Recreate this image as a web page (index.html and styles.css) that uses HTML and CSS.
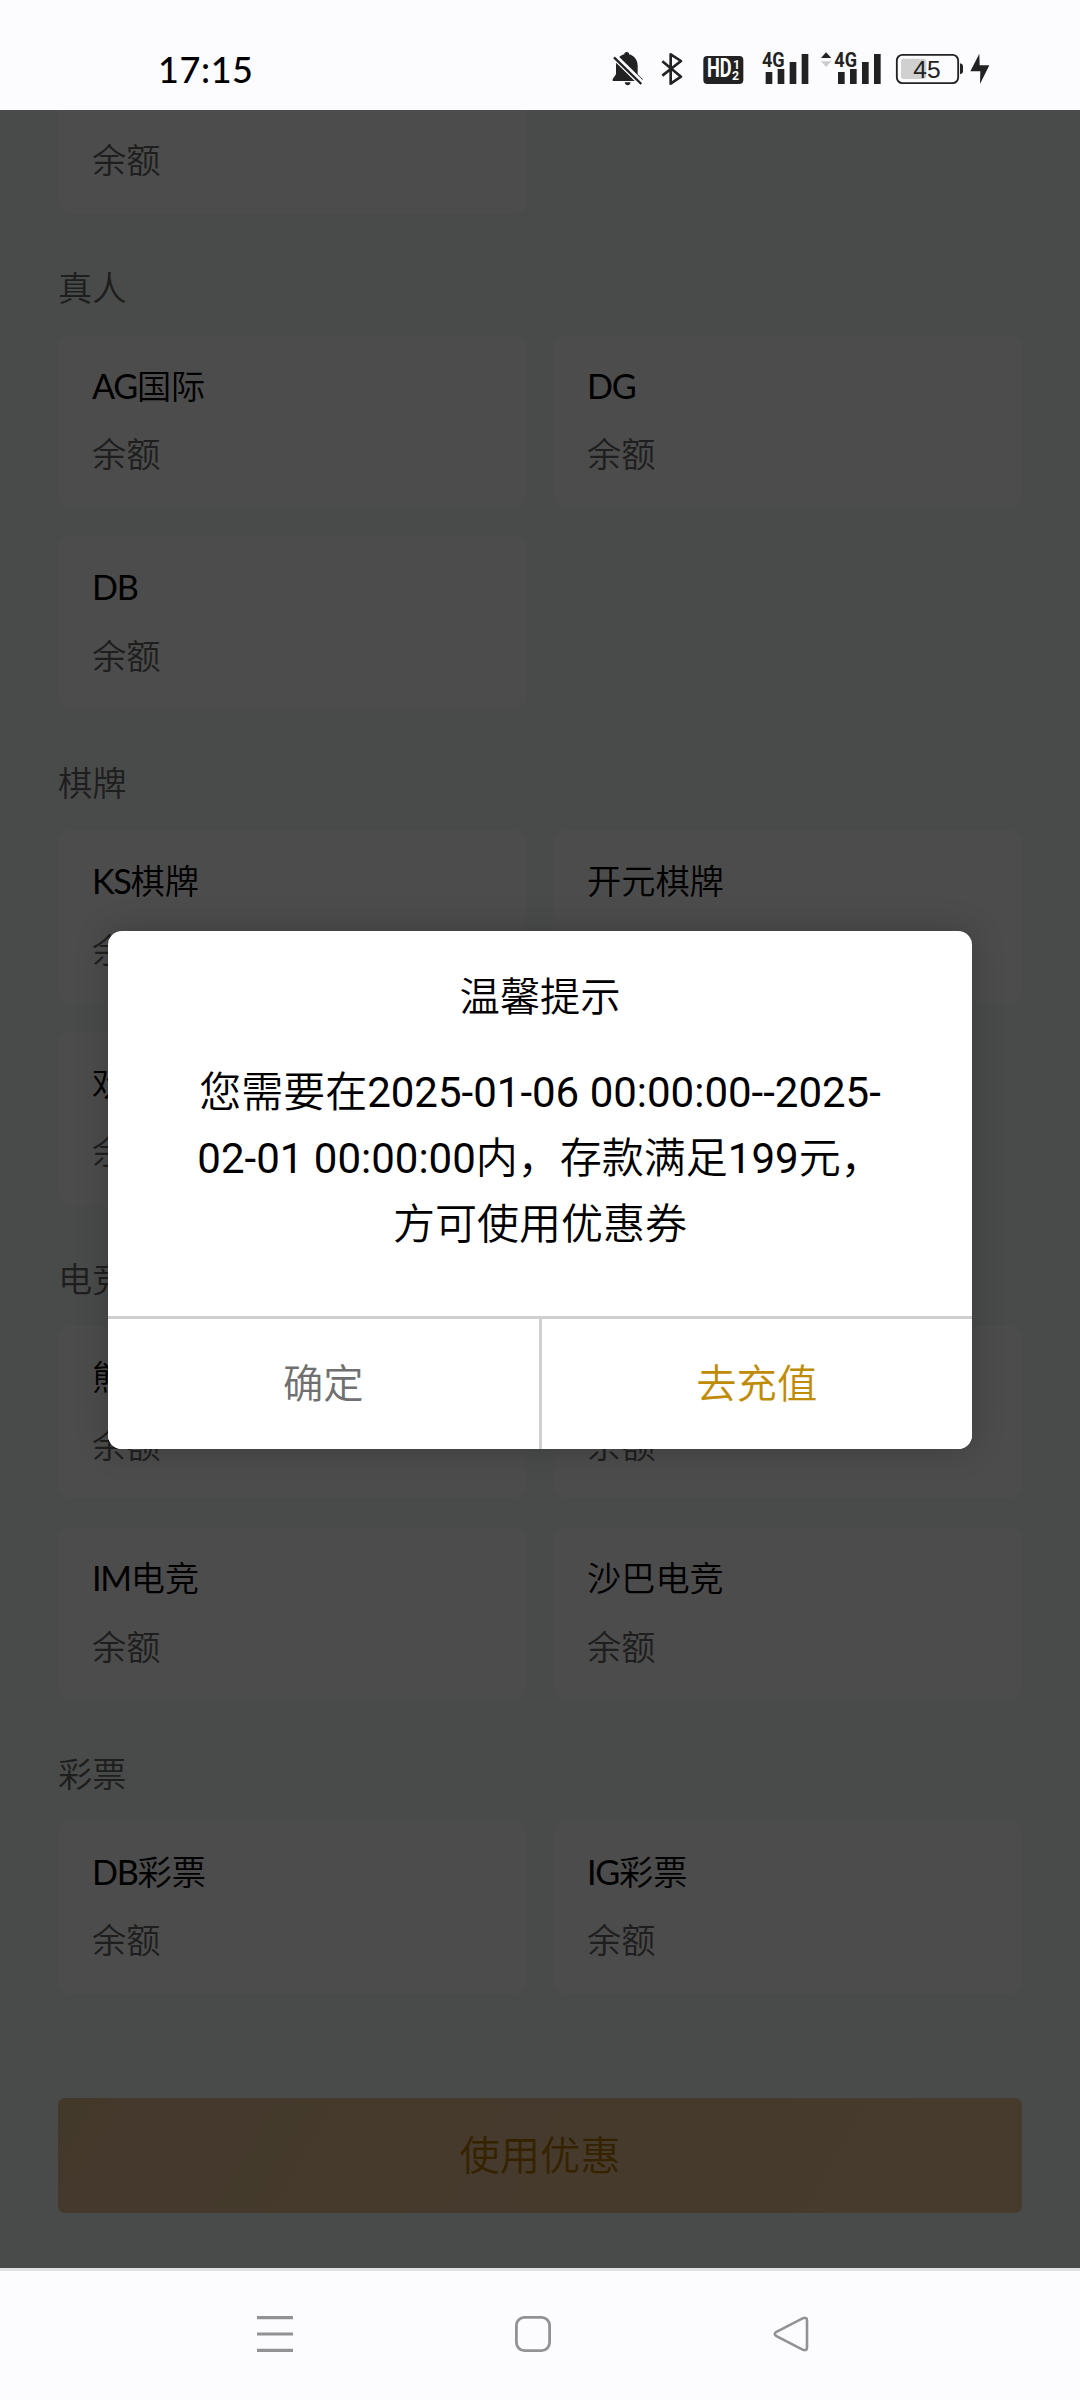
FILE: index.html
```html
<!DOCTYPE html>
<html lang="zh-CN">
<head>
<meta charset="utf-8">
<title>使用优惠</title>
<link rel="stylesheet" href="styles.css">
</head>
<body>
<div class="screen">
  <header class="status">
    <div class="clock">17:15</div>
    <div class="status-icons">
      <svg class="icon" width="32" height="34" viewBox="94 66 96 102">
        <path fill="#222" d="M96 153v-6l10-14v-26c0-18 10-30 25-34v-3q8-8 14 0v3c15 4 26 16 26 34v26l15 14v6zM132 157h18q-2 9-9 9t-9-9z"/>
        <path stroke="#fcfcff" stroke-width="19" d="M97 76L190 167"/>
        <path stroke="#222" stroke-width="7" d="M100 82L182 162"/>
      </svg>
      <svg class="icon bluetooth" width="22" height="34" viewBox="241 66 66 102">
        <path fill="none" stroke="#222" stroke-width="8" stroke-linejoin="round" d="M245 94L301 140 270 161V73l31 20L245 137"/>
      </svg>
      <svg class="icon hd" width="41" height="34" viewBox="368 66 123 102">
        <rect x="369" y="78" width="120" height="84" rx="12" fill="#222"/>
        <text class="hd-text" x="380" y="142" textLength="74" lengthAdjust="spacingAndGlyphs">HD</text>
        <text class="hd-num" x="458" y="116">1</text>
        <text class="hd-num" x="455" y="151">2</text>
      </svg>
      <svg class="icon signal" width="47" height="34" viewBox="545 66 141 102">
        <path fill="#222" d="M556 126h20v36h-20zM592 117h20v45h-20zM628 96h20v66h-20zM664 72h20v90h-20z"/>
        <text class="net" x="545" y="111" textLength="68" lengthAdjust="spacingAndGlyphs">4G</text>
      </svg>
      <svg class="icon signal-data" width="60" height="34" viewBox="721 66 180 102">
        <path fill="#222" d="M721 84L736 67 752 84z"/>
        <path fill="#ccc" d="M721 94L736 111 752 94z"/>
        <path fill="#222" d="M772 126h20v36h-20zM808 117h20v45h-20zM844 96h20v66h-20zM880 72h20v90h-20z"/>
        <text class="net" x="761" y="111" textLength="68" lengthAdjust="spacingAndGlyphs">4G</text>
      </svg>
      <svg class="icon battery" width="67" height="34" viewBox="948 66 201 102">
        <rect x="963" y="86" width="76" height="61" rx="8" fill="#d0d0d0"/>
        <rect x="950.5" y="74.500" width="184" height="85" rx="17" fill="none" stroke="#222" stroke-width="5.500"/>
        <path fill="#222" d="M1140 100q9 2 9 9v15q0 7-9 9z"/>
        <text class="level" x="1000" y="143" textLength="82" lengthAdjust="spacingAndGlyphs">45</text>
      </svg>
      <svg class="icon bolt" width="20" height="34" viewBox="1170 66 60 102">
        <path fill="#222" d="M1198 71L1171 124H1201L1200 162 1228 106H1199z"/>
      </svg>
    </div>
  </header>

  <main class="page">
    <div class="grid first">
      <div class="card"><p class="name"></p><p class="balance">余额</p></div>
    </div>

    <h2 class="section">真人</h2>
    <div class="grid">
      <div class="card"><p class="name"><span class="latin">AG</span>国际</p><p class="balance">余额</p></div>
      <div class="card"><p class="name"><span class="latin">DG</span></p><p class="balance">余额</p></div>
      <div class="card"><p class="name"><span class="latin">DB</span></p><p class="balance">余额</p></div>
    </div>

    <h2 class="section">棋牌</h2>
    <div class="grid">
      <div class="card"><p class="name"><span class="latin">KS</span>棋牌</p><p class="balance">余额</p></div>
      <div class="card"><p class="name">开元棋牌</p><p class="balance"></p></div>
      <div class="card"><p class="name">欢</p><p class="balance">余额</p></div>
    </div>

    <h2 class="section">电竞</h2>
    <div class="grid">
      <div class="card"><p class="name">熊</p><p class="balance">余额</p></div>
      <div class="card"><p class="name"></p><p class="balance">余额</p></div>
      <div class="card"><p class="name"><span class="latin">IM</span>电竞</p><p class="balance">余额</p></div>
      <div class="card"><p class="name">沙巴电竞</p><p class="balance">余额</p></div>
    </div>

    <h2 class="section">彩票</h2>
    <div class="grid">
      <div class="card"><p class="name"><span class="latin">DB</span>彩票</p><p class="balance">余额</p></div>
      <div class="card"><p class="name"><span class="latin">IG</span>彩票</p><p class="balance">余额</p></div>
    </div>

    <button class="submit">使用优惠</button>

    <div class="mask">
      <div class="dialog">
        <h3 class="dialog-title">温馨提示</h3>
        <p class="dialog-text">您需要在<span class="num">2025-01-06 00:00:00--2025-</span><br><span class="num">02-01 00:00:00</span>内，存款满足<span class="num">199</span>元，<br>方可使用优惠券</p>
        <div class="actions">
          <button class="action">确定</button>
          <button class="action primary">去充值</button>
        </div>
      </div>
    </div>
  </main>

  <nav class="nav">
    <svg width="36" height="36" viewBox="0 0 36 36"><path stroke="#929295" stroke-width="3.200" d="M0 1.600H36M0 18H36M0 34.400H36"/></svg>
    <svg width="36" height="36" viewBox="0 0 36 36"><rect x="1.400" y="1.400" width="33.200" height="33.200" rx="8" fill="none" stroke="#929295" stroke-width="2.800"/></svg>
    <svg width="36" height="36" viewBox="0 0 36 36"><path fill="none" stroke="#929295" stroke-width="2.600" d="M3 16.200L30 2.200Q34 .8 34 4.500V31.500Q34 35.200 30 33.800L3 19.800Q.5 18 3 16.200z"/></svg>
  </nav>
</div>
</body>
</html>
```
FILE: styles.css
```css
* { box-sizing: border-box; margin: 0; padding: 0; }

body {
  font-family: Lato, "Noto Sans CJK SC", sans-serif;
  font-weight: 350;
  background: #fcfcff;
}

.screen {
  width: 1080px;
  height: 2400px;
  display: flex;
  flex-direction: column;
  overflow: hidden;
}

.status {
  height: 110px;
  flex: none;
  display: flex;
  justify-content: space-between;
  padding: 47px 90px 0 158px;
  background: #fcfcff;
}

.clock { font-size: 36px; font-weight: 500; line-height: 44px; color: #000; letter-spacing: .6px; }

.status-icons { display: flex; padding-top: 5px; }
.icon { display: block; flex: none; overflow: visible; }
.bluetooth { margin-left: 17px; }
.hd { margin-left: 20px; }
.signal { margin-left: 18px; }
.signal-data { margin-left: 12px; }
.battery { margin-left: 15px; }
.bolt { margin-left: 7px; }
.hd-text { font: 700 78px Roboto, sans-serif; fill: #fff; }
.hd-num { font: 700 37px Roboto, sans-serif; fill: #fff; stroke: #222; stroke-width: 8px; paint-order: stroke; }
.net { font: 700 62px Roboto, sans-serif; fill: #222; stroke: #fcfcff; stroke-width: 7px; paint-order: stroke; }
.level { font: 400 72px "Liberation Sans", sans-serif; fill: #222; }

.page {
  position: relative;
  flex: 1;
  padding: 0 58px;
  background: #f5faf7;
  overflow: hidden;
}

.grid {
  display: grid;
  grid-template-columns: 1fr 1fr;
  gap: 28.8px 26px;
}

.first { margin-top: -69px; }

.card {
  height: 172.8px;
  padding: 17px 34px 0;
  border-radius: 14px;
  background: #fefdfd;
}

.name, .balance { height: 68.4px; font-size: 34.2px; line-height: 68.4px; white-space: nowrap; }
.name { color: #000; }
.latin { font-weight: 400; letter-spacing: -1.3px; }
.balance { color: #666; }

.section {
  height: 121px;
  padding-top: 40px;
  font-size: 34.2px;
  font-weight: 350;
  line-height: 68px;
  color: #666;
}

.submit {
  display: block;
  width: 100%;
  height: 115px;
  margin-top: 104px;
  padding-bottom: 6px;
  border: 0;
  border-radius: 7px;
  background: linear-gradient(120deg, #e2bf92, #efc69a);
  font: inherit;
  font-size: 40.3px;
  color: #b17500;
}

.mask {
  position: absolute;
  inset: 0;
  background: rgba(0, 0, 0, .7);
  padding: 821px 108px 0;
}

.dialog {
  height: 518px;
  display: flex;
  flex-direction: column;
  border-radius: 14px;
  background: #fff;
  box-shadow: 0 0 34px rgba(0, 0, 0, .2);
  overflow: hidden;
  text-align: center;
  color: #000;
}

.dialog-title { padding-top: 35px; font-size: 40.3px; font-weight: 350; line-height: 60px; }

.dialog-text {
  flex: 1;
  padding-top: 34px;
  font-family: Roboto, "Noto Sans CJK SC", sans-serif;
  font-size: 42px;
  line-height: 66px;
  white-space: nowrap;
}
.num { font-weight: 400; }

.actions { height: 133px; flex: none; display: flex; border-top: 3px solid #cfcfcf; }

.action {
  flex: 1;
  padding-bottom: 7px;
  border: 0;
  background: #fff;
  font: inherit;
  font-size: 40.3px;
  color: #707070;
}
.action.primary { border-left: 3px solid #cfcfcf; color: #bf8c08; }

.nav {
  height: 132px;
  flex: none;
  display: flex;
  gap: 222px;
  padding: 45px 0 0 257px;
  border-top: 3px solid #dfe2e6;
  background: #fcfcff;
}
```
